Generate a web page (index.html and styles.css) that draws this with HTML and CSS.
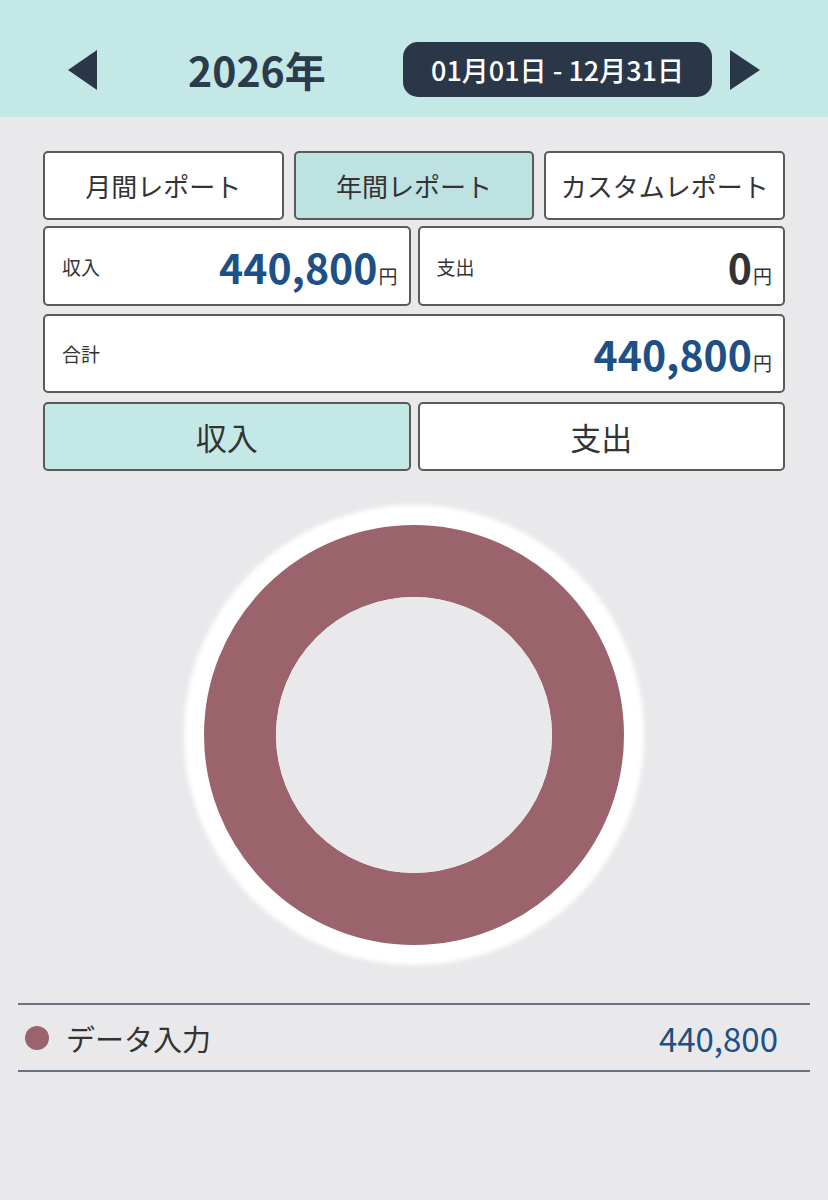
FILE: index.html
```html
<!DOCTYPE html>
<html lang="ja">
<head>
    <meta charset="UTF-8">
    <meta name="viewport" content="width=device-width, initial-scale=1.0">
    <title>レポート</title>
    <link rel="stylesheet" href="styles.css">
</head>
<body>

<header class="top-bar">
    <button class="arrow-btn arrow-left" aria-label="前の年"></button>
    <div class="year">2026年</div>
    <div class="range-pill">01月01日 - 12月31日</div>
    <button class="arrow-btn arrow-right" aria-label="次の年"></button>
</header>

<main class="content">
    <div class="tab-row">
        <button class="tab">月間レポート</button>
        <button class="tab active">年間レポート</button>
        <button class="tab">カスタムレポート</button>
    </div>

    <div class="sum-row">
        <div class="sum-card">
            <span class="sum-label">収入</span>
            <span class="sum-value blue">440,800<small>円</small></span>
        </div>
        <div class="sum-card">
            <span class="sum-label">支出</span>
            <span class="sum-value">0<small>円</small></span>
        </div>
    </div>

    <div class="sum-card total">
        <span class="sum-label">合計</span>
        <span class="sum-value blue">440,800<small>円</small></span>
    </div>

    <div class="toggle-row">
        <button class="toggle active">収入</button>
        <button class="toggle">支出</button>
    </div>
</main>

<div class="chart">
    <svg width="480" height="470" viewBox="0 0 480 470">
        <defs>
            <filter id="soft" x="-10%" y="-10%" width="120%" height="120%">
                <feGaussianBlur stdDeviation="2"/>
            </filter>
        </defs>
        <circle cx="240" cy="235" r="230" fill="#ffffff" filter="url(#soft)"/>
        <circle cx="240" cy="235" r="174" fill="none" stroke="#9b636b" stroke-width="72"/>
        <circle cx="240" cy="235" r="138" fill="#e9e9ec"/>
    </svg>
</div>

<div class="legend">
    <div class="legend-row">
        <span class="legend-dot"></span>
        <span class="legend-name">データ入力</span>
        <span class="legend-value">440,800</span>
    </div>
</div>

</body>
</html>
```

FILE: styles.css
```css
body {
    margin: 0;
    background-color: #e9e9ec;
    font-family: "Noto Sans CJK JP", "Noto Sans", sans-serif;
    color: #333;
}

button {
    font-family: inherit;
    cursor: pointer;
}

.top-bar {
    background-color: #c3e8e6;
    height: 117px;
    display: flex;
    align-items: center;
    box-sizing: border-box;
    padding: 22px 0 0 68px;
}

.arrow-btn {
    width: 0;
    height: 0;
    padding: 0;
    background: none;
    border-top: 20px solid transparent;
    border-bottom: 20px solid transparent;
}

.arrow-left {
    border-left: none;
    border-right: 29px solid #2a3748;
}

.arrow-right {
    border-right: none;
    border-left: 30px solid #2a3748;
    margin-left: 18px;
}

.year {
    margin-left: 91px;
    width: 215px;
    font-size: 41px;
    font-weight: 700;
    color: #2b3a4c;
    line-height: 1;
}

.range-pill {
    width: 309px;
    height: 55px;
    box-sizing: border-box;
    background-color: #2a3748;
    color: #fff;
    border-radius: 15px;
    display: flex;
    align-items: center;
    justify-content: center;
    font-size: 27px;
    font-weight: 500;
}

.content {
    padding: 34px 43px 0;
    display: flex;
    flex-direction: column;
}

.tab-row {
    display: grid;
    grid-template-columns: repeat(3, 1fr);
    gap: 10px;
}

.tab,
.toggle {
    height: 69px;
    background: #fff;
    border: 2px solid #5a5a5a;
    border-radius: 5px;
    color: #333;
    padding: 0;
}

.tab {
    font-size: 26px;
}

.tab.active {
    background-color: #bde2e1;
}

.sum-row {
    display: grid;
    grid-template-columns: 1fr 1fr;
    gap: 7px;
    margin-top: 6px;
}

.sum-card {
    height: 80px;
    box-sizing: border-box;
    background: #fff;
    border: 2px solid #5a5a5a;
    border-radius: 5px;
    display: flex;
    align-items: center;
    justify-content: space-between;
    padding: 0 11px 0 17px;
}

.sum-card.total {
    margin-top: 8px;
    height: 79px;
}

.sum-label {
    font-size: 19px;
    color: #333;
}

.sum-value {
    font-size: 41px;
    font-weight: 700;
    color: #333;
    line-height: 1;
}

.sum-value small {
    font-size: 19px;
    font-weight: 400;
    margin-left: 1px;
}

.sum-value.blue {
    color: #1e4f85;
}

.sum-value.blue small {
    color: #333;
}

.toggle-row {
    display: grid;
    grid-template-columns: 1fr 1fr;
    gap: 7px;
    margin-top: 9px;
}

.toggle {
    font-size: 31px;
}

.toggle.active {
    background-color: #c3e8e6;
}

.chart {
    display: flex;
    justify-content: center;
    margin-top: 29px;
}

.chart svg {
    display: block;
}

.legend {
    margin: 33px 18px 0;
    border-top: 2px solid #6a7380;
    border-bottom: 2px solid #6a7380;
}

.legend-row {
    height: 65px;
    display: flex;
    align-items: center;
    padding: 0 32px 0 7px;
}

.legend-dot {
    width: 24px;
    height: 24px;
    border-radius: 50%;
    background-color: #9b636b;
}

.legend-name {
    margin-left: 17px;
    font-size: 29px;
    color: #333;
    flex: 1;
}

.legend-value {
    font-size: 33px;
    color: #1e4f85;
}
```
